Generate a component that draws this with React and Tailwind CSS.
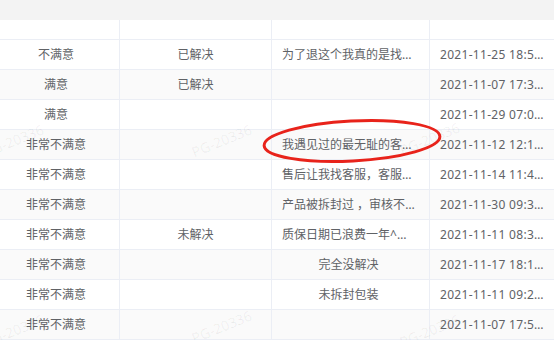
const ROWS = [
  ['不满意', '已解决', '为了退这个我真的是找了好几次客服', '2021-11-25 18:53:12'],
  ['满意', '已解决', '', '2021-11-07 17:34:50'],
  ['满意', '', '', '2021-11-29 07:02:16'],
  ['非常不满意', '', '我遇见过的最无耻的客服态度', '2021-11-12 12:10:41'],
  ['非常不满意', '', '售后让我找客服，客服又让我找售后', '2021-11-14 11:47:03'],
  ['非常不满意', '', '产品被拆封过 ，审核不通过', '2021-11-30 09:36:28'],
  ['非常不满意', '未解决', '质保日期已浪费一年^希望尽快处理', '2021-11-11 08:31:55'],
  ['非常不满意', '', '完全没解决', '2021-11-17 18:15:09'],
  ['非常不满意', '', '未拆封包装', '2021-11-11 09:21:37'],
  ['非常不满意', '', '', '2021-11-07 17:52:44'],
];

// watermark tiles
const MARKS = [
  { left: -18, top: 130 },
  { left: 190, top: 130 },
  { left: 398, top: 128 },
  { left: -18, top: 320 },
  { left: 190, top: 316 },
  { left: 398, top: 320 },
];

const COLS = 'grid grid-cols-[127px_152px_158px_126px]';

function Cell({ children, last, className = 'px-[10px]' }) {
  return (
    <div
      className={`h-full ${className} border-b border-[#ebeef5] ${last ? 'tracking-[0.3px]' : 'border-r'} truncate text-center leading-[29px]`}
    >
      {children}
    </div>
  );
}

export default function App() {
  return (
    <div
      className="relative w-[554px] h-[340px] overflow-hidden bg-white text-[12px] text-[#606266]"
      style={{ fontFamily: '"Noto Sans", "Noto Sans CJK SC", sans-serif' }}
    >
      <div className="h-[20px] bg-[#f3f3f3]" />
      <div className="-ml-[7px]">
        <div className={`${COLS} h-[20px] bg-white`}>
          <Cell />
          <Cell />
          <Cell />
          <Cell last />
        </div>
        {ROWS.map((r, i) => (
          <div
            key={i}
            className={`${COLS} h-[30px] ${i % 2 === 1 ? 'bg-[#fafafa]' : 'bg-white'}`}
          >
            <Cell>{r[0]}</Cell>
            <Cell>{r[1]}</Cell>
            <Cell className="pl-[10px] pr-[14px]">{r[2]}</Cell>
            <Cell last>{r[3]}</Cell>
          </div>
        ))}
      </div>

      {MARKS.map((m, i) => (
        <span
          key={i}
          className="absolute text-[14px] text-[#000]/[0.06] -rotate-[22deg] pointer-events-none select-none whitespace-nowrap"
          style={{ left: m.left, top: m.top }}
        >
          PG-20336
        </span>
      ))}

      <svg
        className="absolute left-[256px] top-[114px] pointer-events-none"
        width="194"
        height="52"
        viewBox="0 0 194 52"
      >
        <ellipse
          cx="96"
          cy="27"
          rx="88"
          ry="20"
          transform="rotate(-3 96 27)"
          fill="none"
          stroke="#e8231b"
          strokeWidth="3"
        />
      </svg>
    </div>
  );
}
